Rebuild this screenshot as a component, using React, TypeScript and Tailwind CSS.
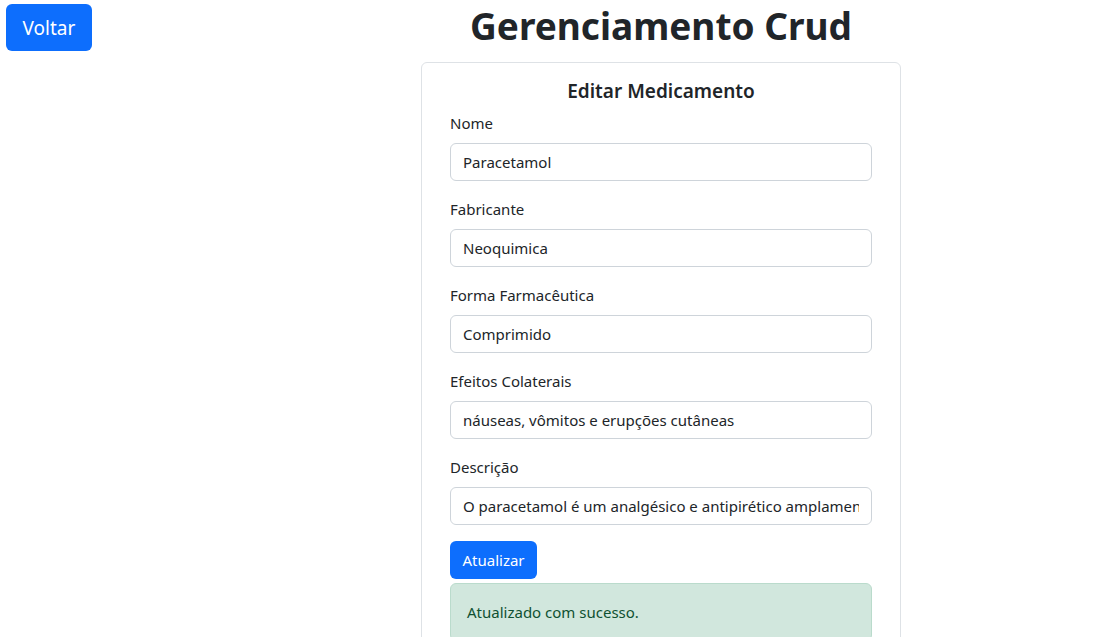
import { useState } from 'react';

const fields = [
  { label: 'Nome', value: 'Paracetamol' },
  { label: 'Fabricante', value: 'Neoquimica' },
  { label: 'Forma Farmacêutica', value: 'Comprimido' },
  { label: 'Efeitos Colaterais', value: 'náuseas, vômitos e erupções cutâneas' },
  {
    label: 'Descrição',
    value:
      'O paracetamol é um analgésico e antipirético amplamente utilizado para o alívio de dores e febre.',
  },
];

export default function App() {
  const [values, setValues] = useState(fields.map((f) => f.value));

  return (
    <div
      className="min-h-screen bg-white text-[#212529] flex items-start"
      style={{ fontFamily: '"Noto Sans", "Segoe UI", Roboto, sans-serif' }}
    >
      <div className="w-[421px] shrink-0 pt-1 pl-1.5">
        <button className="w-[86px] h-[47px] rounded-md bg-[#0d6efd] text-white text-[19px] leading-[30px]">
          Voltar
        </button>
      </div>

      <div className="w-[480px] shrink-0">
        <h1 className="text-center text-[37px] font-bold leading-[48px] mt-0.5">
          Gerenciamento Crud
        </h1>

        <div className="mt-3 border border-[#dee2e6] rounded-md px-7 pt-4 pb-6">
          <h5 className="text-center text-[19px] font-semibold leading-6 mb-2">
            Editar Medicamento
          </h5>

          {fields.map((field, i) => (
            <div key={field.label} className="mb-4">
              <label className="block text-[15px] leading-6 mb-2">{field.label}</label>
              <input
                value={values[i]}
                onChange={(e) => {
                  const next = [...values];
                  next[i] = e.target.value;
                  setValues(next);
                }}
                className="w-full h-[38px] px-3 border border-[#ced4da] rounded-md text-[15px] text-[#212529] outline-none"
              />
            </div>
          ))}

          <button className="w-[87px] h-[38px] rounded-md bg-[#0d6efd] text-white text-[15px]">
            Atualizar
          </button>

          <div className="mt-1 border border-[#badbcc] bg-[#d1e7dd] text-[#0f5132] rounded-md px-4 py-4 text-[15px] leading-6">
            Atualizado com sucesso.
          </div>
        </div>
      </div>
    </div>
  );
}
